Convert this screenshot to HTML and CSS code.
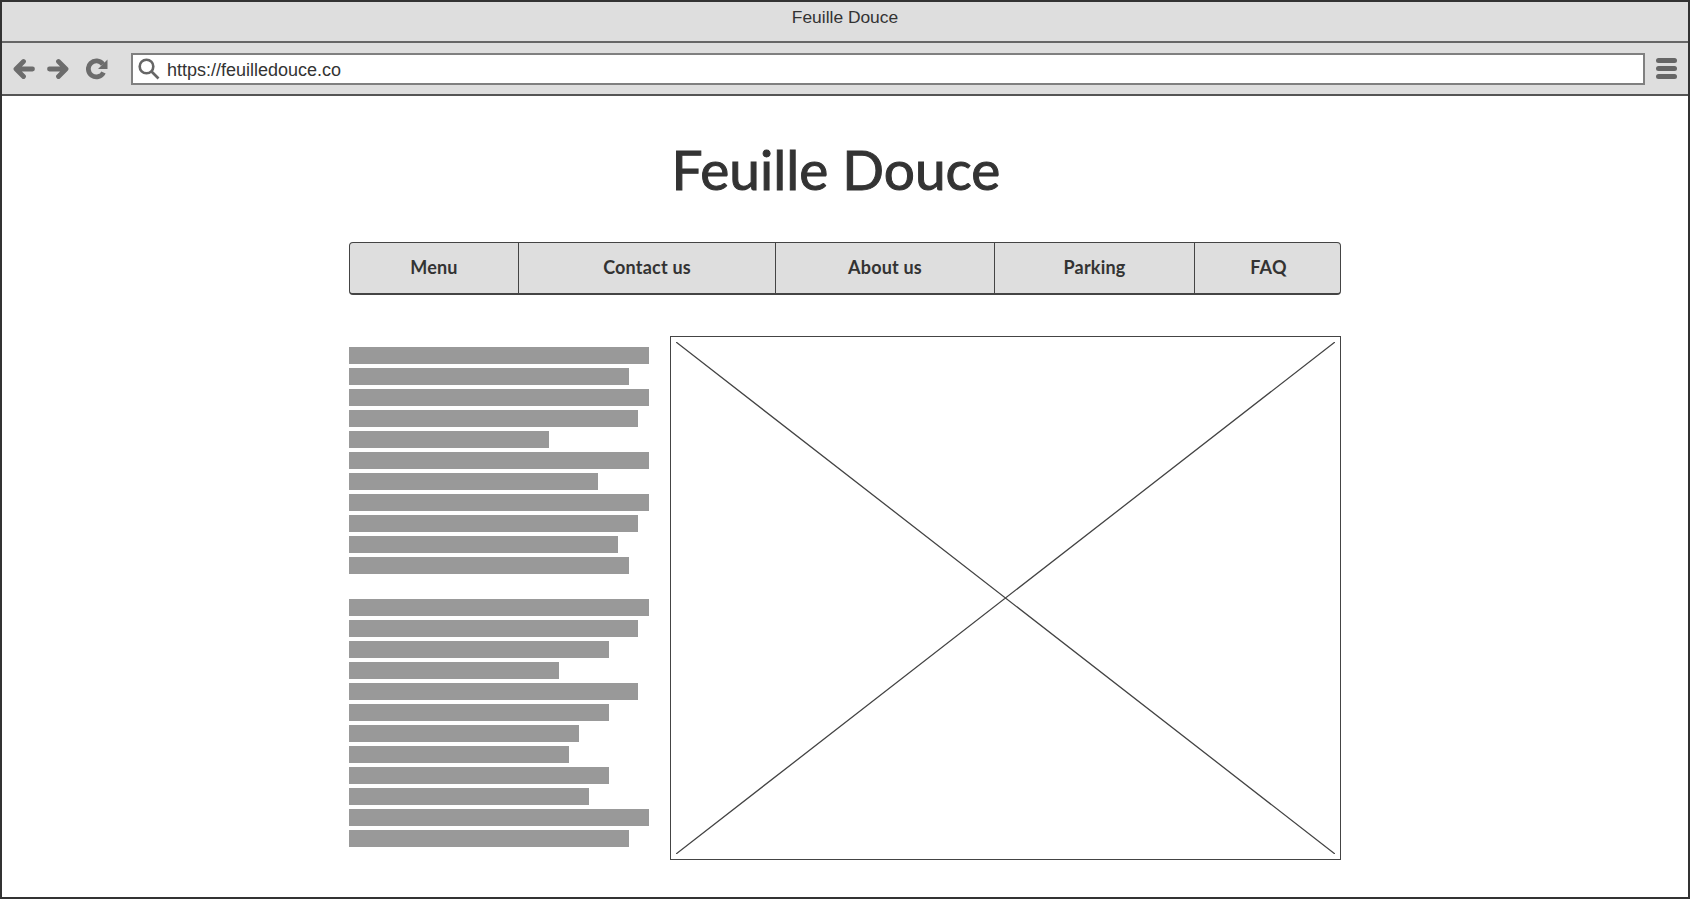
FILE: index.html
```html
<!DOCTYPE html>
<html lang="en">
<head>
<meta charset="utf-8">
<title>Feuille Douce</title>
<link rel="stylesheet" href="styles.css">
</head>
<body>
<div class="window">
  <header class="titlebar">Feuille Douce</header>
  <div class="toolbar">
    <svg class="icon icon-back" viewBox="0 0 22 22"><path d="M19.5 11H3.5M10.5 3.5L3 11l7.5 7.500"/></svg>
    <svg class="icon icon-forward" viewBox="0 0 22 22"><path d="M2.500 11h16M11.500 3.500L19 11l-7.500 7.500"/></svg>
    <svg class="icon icon-reload" viewBox="0 0 22 22"><path class="thick" d="M17.5 14.5a8 8 0 1 1-.6-8.2"/><path class="solid" d="M21.5 1.500v9.500h-9.500z"/></svg>
    <div class="address">
      <svg class="search" viewBox="0 0 22 22"><circle cx="8.500" cy="8.500" r="6.800"/><path d="M13.500 13.500l7 7"/></svg>
      <span class="url">https://feuilledouce.co</span>
    </div>
    <div class="hamburger"><span></span><span></span><span></span></div>
  </div>
  <main class="page">
    <h1 class="brand">Feuille Douce</h1>
    <nav class="nav">
      <a class="nav-item">Menu</a>
      <a class="nav-item">Contact us</a>
      <a class="nav-item">About us</a>
      <a class="nav-item">Parking</a>
      <a class="nav-item">FAQ</a>
    </nav>
    <section class="content">
      <div class="text">
        <div class="para">
          <div class="bar" style="width:300px"></div>
          <div class="bar" style="width:280px"></div>
          <div class="bar" style="width:300px"></div>
          <div class="bar" style="width:289px"></div>
          <div class="bar" style="width:200px"></div>
          <div class="bar" style="width:300px"></div>
          <div class="bar" style="width:249px"></div>
          <div class="bar" style="width:300px"></div>
          <div class="bar" style="width:289px"></div>
          <div class="bar" style="width:269px"></div>
          <div class="bar" style="width:280px"></div>
        </div>
        <div class="para">
          <div class="bar" style="width:300px"></div>
          <div class="bar" style="width:289px"></div>
          <div class="bar" style="width:260px"></div>
          <div class="bar" style="width:210px"></div>
          <div class="bar" style="width:289px"></div>
          <div class="bar" style="width:260px"></div>
          <div class="bar" style="width:230px"></div>
          <div class="bar" style="width:220px"></div>
          <div class="bar" style="width:260px"></div>
          <div class="bar" style="width:240px"></div>
          <div class="bar" style="width:300px"></div>
          <div class="bar" style="width:280px"></div>
        </div>
      </div>
      <div class="placeholder">
        <svg class="cross" viewBox="0 0 100 100" preserveAspectRatio="none"><path d="M0 0L100 100M100 0L0 100" vector-effect="non-scaling-stroke"/></svg>
      </div>
    </section>
  </main>
</div>
</body>
</html>
```
FILE: styles.css
```css
* { box-sizing: border-box; }
html, body { margin: 0; padding: 0; background: #fff; }
.window {
  width: 1690px;
  height: 899px;
  border: 2px solid #333;
  display: flex;
  flex-direction: column;
  overflow: hidden;
}
.titlebar {
  height: 41px;
  flex: none;
  background: #dedede;
  border-bottom: 2px solid #666;
  color: #333;
  font: 17.400px/31px "Liberation Sans", Arial, sans-serif;
  text-align: center;
}
.toolbar {
  height: 53px;
  flex: none;
  background: #dedede;
  border-bottom: 2px solid #555;
  display: flex;
  align-items: center;
  padding: 0 9px 0 11px;
}
.icon { width: 22px; height: 22px; flex: none; }
.icon path { fill: none; stroke: #6c6c6c; stroke-width: 4.800; stroke-linecap: round; stroke-linejoin: round; }
.icon .solid { fill: #6c6c6c; stroke: none; }
.icon .thick { stroke-linecap: butt; }
.icon-forward { margin-left: 12px; }
.icon-reload { margin-left: 17px; }
.address {
  margin-left: 23px;
  width: 1514px;
  height: 32px;
  flex: none;
  background: #fff;
  border: 2px solid #808080;
  display: flex;
  align-items: center;
  padding-left: 5px;
}
.search { width: 22px; height: 22px; flex: none; }
.search circle, .search path { fill: none; stroke: #666; stroke-width: 2.600; }
.url {
  margin: 2px 0 0 7px;
  font: 18px/22px "Liberation Sans", Arial, sans-serif;
  color: #333;
}
.hamburger {
  margin-left: 11px;
  width: 21px;
  display: flex;
  flex-direction: column;
  gap: 3px;
}
.hamburger span { height: 5px; border-radius: 3px; background: #666; }
.page {
  flex: 1;
  width: 992px;
  margin-left: 347px;
}
.brand {
  margin: 0;
  padding: 41px 18px 0 0;
  height: 146px;
  font: 400 55px/64px Lato, "Open Sans", sans-serif;
  -webkit-text-stroke: 1px #333;
  color: #333;
  text-align: center;
}
.nav {
  display: grid;
  grid-template-columns: 169px 257px 219px 200px 147px;
  height: 53px;
  background: #dedede;
  border: 2px solid #444;
  border-width: 1.500px 1.500px 2px;
  border-radius: 4px;
}
.nav-item {
  display: flex;
  align-items: center;
  justify-content: center;
  padding-bottom: 2px;
  border-right: 1.500px solid #444;
  color: #333;
  font: 700 18px/24px Lato, "Open Sans", sans-serif;
  letter-spacing: 0.200px;
}
.nav-item:last-child { border-right: 0; }
.content {
  display: flex;
  gap: 21px;
  margin-top: 41px;
}
.text {
  width: 300px;
  flex: none;
  padding-top: 11px;
  display: flex;
  flex-direction: column;
  gap: 25px;
}
.para { display: flex; flex-direction: column; gap: 4px; }
.bar { height: 17px; background: #999; }
.placeholder {
  width: 671px;
  height: 524px;
  flex: none;
  border: 1.500px solid #444;
  padding: 5px;
}
.cross { display: block; width: 100%; height: 100%; }
.cross path { fill: none; stroke: #444; stroke-width: 1.300; }
```
